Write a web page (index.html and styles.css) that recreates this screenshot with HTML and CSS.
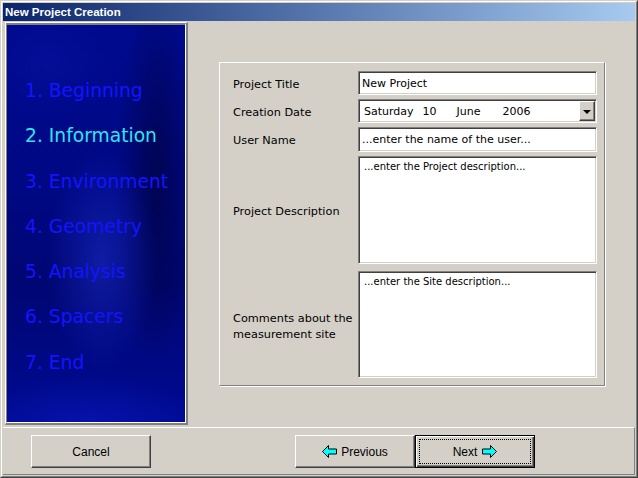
FILE: index.html
```html
<!DOCTYPE html>
<html>
<head>
<meta charset="utf-8">
<title>New Project Creation</title>
<link rel="stylesheet" href="styles.css">
</head>
<body>
<div class="window">
  <div class="frame">
    <div class="titlebar">New Project Creation</div>
    <div class="main">
      <div class="side">
        <div class="side-inner">
          <ol class="steps">
            <li>1. Beginning</li>
            <li class="active">2. Information</li>
            <li>3. Environment</li>
            <li>4. Geometry</li>
            <li>5. Analysis</li>
            <li>6. Spacers</li>
            <li>7. End</li>
          </ol>
        </div>
      </div>
      <div class="content">
        <div class="group">
          <div class="grid">
            <div class="label">Project Title</div>
            <div class="field">New Project</div>

            <div class="label">Creation Date</div>
            <div class="field combo">
              <span class="d-day">Saturday</span>
              <span class="d-num">10</span>
              <span class="d-month">June</span>
              <span class="d-year">2006</span>
              <span class="drop"><span class="tri"></span></span>
            </div>

            <div class="label">User Name</div>
            <div class="field">...enter the name of the user...</div>

            <div class="label">Project Description</div>
            <div class="field area">...enter the Project description...</div>

            <div class="label label-comments">Comments about the measurement site</div>
            <div class="field area area-comments">...enter the Site description...</div>
          </div>
        </div>
      </div>
    </div>
    <div class="footer">
      <div class="btn">Cancel</div>
      <div class="btn btn-prev">
        <svg class="arrow" width="15" height="13" viewBox="0 0 15 13"><polygon points="0.5,6.5 6.5,0.5 6.5,4 14.5,4 14.5,9 6.5,9 6.5,12.5" fill="#00ffff" stroke="#000" stroke-width="1"/></svg>
        <span>Previous</span>
      </div>
      <div class="btn btn-default">
        <div class="focus">
          <span>Next</span>
          <svg class="arrow" width="15" height="13" viewBox="0 0 15 13"><polygon points="14.5,6.5 8.5,0.5 8.5,4 0.5,4 0.5,9 8.5,9 8.5,12.5" fill="#00ffff" stroke="#000" stroke-width="1"/></svg>
        </div>
      </div>
    </div>
  </div>
</div>
</body>
</html>
```

FILE: styles.css
```css
html, body {
  margin: 0;
  padding: 0;
  background: #d4d0c8;
}

.window {
  width: 638px;
  height: 478px;
  box-sizing: border-box;
  border: 1px solid;
  border-color: #d4d0c8 #404040 #404040 #d4d0c8;
  background: #d4d0c8;
  display: flex;
}

.frame {
  flex: 1;
  display: flex;
  flex-direction: column;
  border: 1px solid;
  border-color: #ffffff #808080 #808080 #ffffff;
  padding: 1px;
}

.titlebar {
  height: 18px;
  line-height: 18px;
  padding-left: 2px;
  background: linear-gradient(to right, #0a246a, #a6caf0);
  color: #ffffff;
  font-family: "Liberation Sans", Arial, sans-serif;
  font-weight: bold;
  font-size: 11.5px;
  white-space: nowrap;
}

.main {
  height: 406px;
  display: flex;
}

.side {
  margin: 1px 0 0 2px;
  width: 183px;
  height: 403px;
  box-sizing: border-box;
  border-style: solid;
  border-width: 1px 2px 2px 1px;
  border-color: #ffffff #808080 #808080 #ffffff;
  display: flex;
}

.side-inner {
  flex: 1;
  border-style: solid;
  border-width: 2px 1px 1px 1px;
  border-color: #808080 #ffffff #ffffff #808080;
  background:
    radial-gradient(ellipse 55px 110px at 95px 235px, rgba(30, 50, 210, 0.5), rgba(30, 50, 210, 0)),
    radial-gradient(ellipse 40px 190px at 150px 150px, rgba(0, 0, 40, 0.55), rgba(0, 0, 40, 0)),
    radial-gradient(ellipse 70px 60px at 40px 40px, rgba(10, 20, 170, 0.35), rgba(10, 20, 170, 0)),
    radial-gradient(ellipse 120px 50px at 80px 400px, rgba(10, 25, 190, 0.6), rgba(10, 25, 190, 0)),
    linear-gradient(to bottom, #000a8e 0%, #000884 40%, #000672 65%, #000a92 100%);
  overflow: hidden;
}

.steps {
  list-style: none;
  margin: 0;
  padding: 43px 0 0 18px;
  font-family: "DejaVu Sans", Verdana, sans-serif;
  font-size: 18.7px;
  line-height: 45.3px;
  color: #1414ff;
  white-space: nowrap;
}

.steps .active {
  color: #2ee6ee;
}

.content {
  flex: 1;
  padding: 41px 0 0 31px;
}

.group {
  width: 386px;
  height: 324px;
  box-sizing: border-box;
  border: 1px solid;
  border-color: #ffffff #808080 #808080 #ffffff;
  box-shadow: 1px 1px 0 #ffffff;
  padding: 8px 7px 0 13px;
}

.grid {
  display: grid;
  grid-template-columns: 125px 239px;
  grid-template-rows: 24px 24px 25px 108px 110px;
  row-gap: 4px;
  font-family: "DejaVu Sans", Verdana, sans-serif;
  font-size: 11.3px;
  color: #000000;
}

.label {
  align-self: center;
  line-height: 16px;
  padding-top: 3px;
}

.label-comments {
  padding-top: 7px;
  padding-right: 2px;
}

.field {
  box-sizing: border-box;
  background: #ffffff;
  border: 1px solid;
  border-color: #808080 #ffffff #ffffff #808080;
  box-shadow: inset 1px 1px 0 #404040, inset -1px -1px 0 #d4d0c8;
  padding: 0 3px;
  display: flex;
  align-items: center;
  white-space: nowrap;
  overflow: hidden;
  font-size: 11px;
}

.combo {
  padding: 0 1px 0 5px;
}

.d-num { margin-left: 9px; }
.d-month { margin-left: 20px; }
.d-year { margin-left: 22px; }

.drop {
  margin-left: auto;
  width: 16px;
  height: 20px;
  box-sizing: border-box;
  background: #d4d0c8;
  border: 1px solid;
  border-color: #ffffff #404040 #404040 #ffffff;
  box-shadow: inset -1px -1px 0 #808080;
  display: flex;
  align-items: center;
  justify-content: center;
}

.tri {
  width: 0;
  height: 0;
  border-left: 4px solid transparent;
  border-right: 4px solid transparent;
  border-top: 4px solid #000000;
  margin-top: 1px;
}

.area {
  align-items: flex-start;
  padding: 4px 5px;
  font-size: 10px;
  line-height: 12px;
}

.area-comments {
  align-self: end;
  height: 107px;
}

.footer {
  flex: 1;
  display: flex;
  align-items: flex-start;
  border-top: 1px solid #ffffff;
  border-right: 1px solid #808080;
  border-bottom: 1px solid #808080;
  padding: 7px 0 0 28px;
}

.btn {
  width: 120px;
  height: 33px;
  box-sizing: border-box;
  border: 1px solid;
  border-color: #ffffff #404040 #404040 #ffffff;
  box-shadow: inset -1px -1px 0 #808080;
  background: #d4d0c8;
  font-family: "Liberation Sans", Arial, sans-serif;
  font-size: 12px;
  color: #000000;
  display: flex;
  align-items: center;
  justify-content: center;
  gap: 4px;
}

.btn-prev {
  margin-left: 144px;
}

.btn-default {
  border: 1px solid #000000;
  box-shadow: inset 1px 1px 0 #ffffff, inset -1px -1px 0 #404040, inset -2px -2px 0 #808080;
  padding: 3px;
}

.focus {
  flex: 1;
  align-self: stretch;
  border: 1px dotted #000000;
  display: flex;
  align-items: center;
  justify-content: center;
  gap: 5px;
}

.arrow {
  display: block;
}
```
